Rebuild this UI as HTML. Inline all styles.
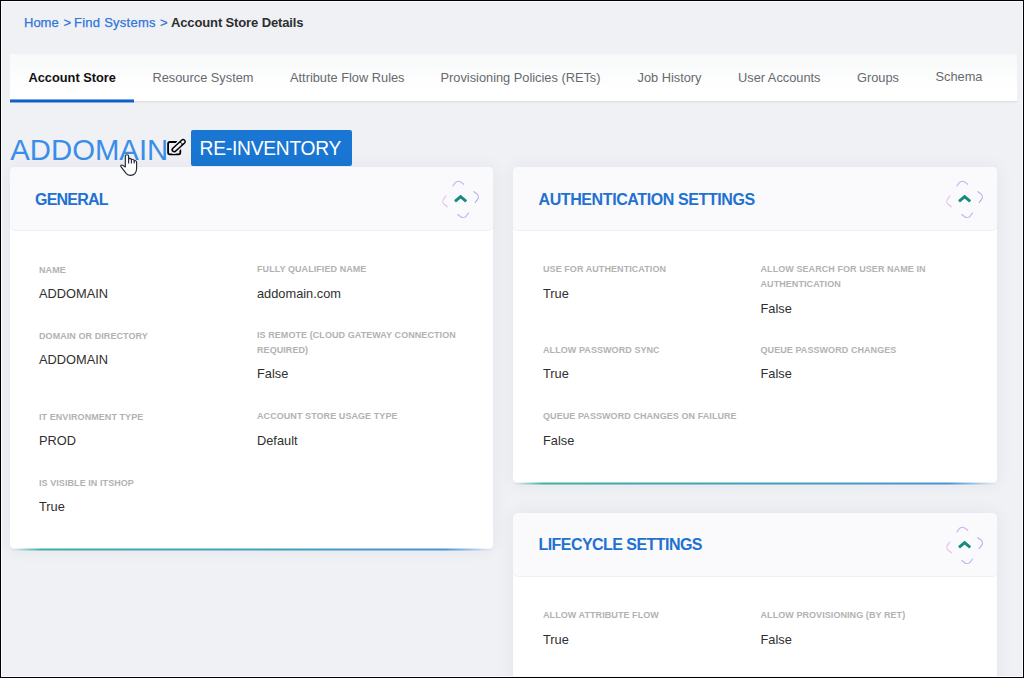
<!DOCTYPE html>
<html>
<head>
<meta charset="utf-8">
<title>Account Store Details</title>
<style>
*{box-sizing:border-box;margin:0;padding:0}
html,body{width:1024px;height:678px;overflow:hidden}
body{background:#eff1f5;font-family:"Liberation Sans",sans-serif;position:relative;color:#333}
.frame{position:absolute;left:0;top:0;width:1024px;height:678px;border:1px solid #000;box-shadow:inset 0 0 0 1px #f9fafc;z-index:50;pointer-events:none}
.t{position:absolute;white-space:nowrap;line-height:1}
.bc{font-size:13px;top:16.4px;color:#2f75da;-webkit-text-stroke:.25px #2f75da}
.bcb{color:#2e2e2e;font-weight:bold;-webkit-text-stroke:0}
.tabs{position:absolute;left:10px;top:54px;width:1007px;height:48px;background:linear-gradient(#f8f9fa,#ffffff 80%);border-bottom:1px solid #dfe2e6;box-shadow:0 1px 0 #e5e7eb}
.tab{font-size:12.8px;color:#666a70;top:18px}
.tab.act{color:#111;font-weight:bold}
.ul{position:absolute;left:0;top:45px;width:124px;height:3px;background:#0b63ca;transform:translateY(.45px)}
.title{font-size:29.3px;color:#3a8ee9;left:10.3px;top:135px;letter-spacing:0}
.btn{position:absolute;left:191px;top:130px;width:161px;height:36px;background:#1976d2;border-radius:2px}
.btn span{color:#fff;font-size:19.2px;left:8.5px;top:8.6px;letter-spacing:-.22px;transform:scaleY(1.05);transform-origin:0 16.3px}
.card{position:absolute;background:#fff;border-radius:5px;box-shadow:0 0 18px rgba(40,50,80,.065)}
.hd{position:absolute;left:0;top:0;width:100%;height:63px;background:#fafafc;border-radius:5px;box-shadow:0 1px 0 #f0f0f4}
.h{font-size:16px;font-weight:bold;color:#2171d1}
.lb{font-size:9px;font-weight:bold;color:#b2b2b2;letter-spacing:.07px}
.v{font-size:12.8px;color:#2f2f2f}
.bar{position:absolute;left:0;right:0;bottom:-1px;height:2px;transform:translateY(.45px);opacity:.88;background:linear-gradient(90deg,rgba(38,166,154,0),#26a69a 6.5%,#2a98b0 50%,#3388cf 90%,rgba(51,136,207,0));border-radius:0 0 5px 5px}
svg{position:absolute;overflow:visible}
</style>
</head>
<body>
<div class="t bc" style="left:24px">Home</div>
<div class="t bc" style="left:63.5px">&gt;</div>
<div class="t bc" style="left:74px;letter-spacing:.25px">Find Systems</div>
<div class="t bc" style="left:160px">&gt;</div>
<div class="t bc bcb" style="left:171px;letter-spacing:-.13px">Account Store Details</div>

<div class="tabs">
  <div class="t tab act" style="left:18.5px">Account Store</div>
  <div class="t tab" style="left:142.5px">Resource System</div>
  <div class="t tab" style="left:280px">Attribute Flow Rules</div>
  <div class="t tab" style="left:430.5px">Provisioning Policies (RETs)</div>
  <div class="t tab" style="left:627.5px">Job History</div>
  <div class="t tab" style="left:728px">User Accounts</div>
  <div class="t tab" style="left:847px">Groups</div>
  <div class="t tab" style="left:925.5px;top:17px">Schema</div>
  <div class="ul"></div>
</div>

<div class="t title">ADDOMAIN</div>
<div class="btn"><span class="t">RE-INVENTORY</span></div>

<div class="card" style="left:10px;top:167px;width:483px;height:382px"><div class="hd"></div><div class="bar"></div></div>
<div class="card" style="left:513px;top:167px;width:484px;height:316px"><div class="hd"></div><div class="bar"></div></div>
<div class="card" style="left:513px;top:513px;width:484px;height:200px"><div class="hd"></div></div>

<div class="t h" style="left:35px;top:192px;letter-spacing:-.8px">GENERAL</div>
<div class="t h" style="left:538.5px;top:192px;letter-spacing:-.4px">AUTHENTICATION SETTINGS</div>
<div class="t h" style="left:538.5px;top:537px;letter-spacing:-.55px">LIFECYCLE SETTINGS</div>

<!-- General -->
<div class="t lb" style="left:39px;top:266px">NAME</div>
<div class="t v" style="left:39px;top:288px">ADDOMAIN</div>
<div class="t lb" style="left:39px;top:332px">DOMAIN OR DIRECTORY</div>
<div class="t v" style="left:39px;top:354px">ADDOMAIN</div>
<div class="t lb" style="left:39px;top:413px">IT ENVIRONMENT TYPE</div>
<div class="t v" style="left:39px;top:435px">PROD</div>
<div class="t lb" style="left:39px;top:479px">IS VISIBLE IN ITSHOP</div>
<div class="t v" style="left:39px;top:501px">True</div>

<div class="t lb" style="left:257px;top:265px">FULLY QUALIFIED NAME</div>
<div class="t v" style="left:257px;top:288px">addomain.com</div>
<div class="t lb" style="left:257px;top:331px">IS REMOTE (CLOUD GATEWAY CONNECTION</div>
<div class="t lb" style="left:257px;top:346px">REQUIRED)</div>
<div class="t v" style="left:257px;top:368px">False</div>
<div class="t lb" style="left:257px;top:412px">ACCOUNT STORE USAGE TYPE</div>
<div class="t v" style="left:257px;top:435px">Default</div>

<!-- Authentication -->
<div class="t lb" style="left:543px;top:265px">USE FOR AUTHENTICATION</div>
<div class="t v" style="left:543px;top:288px">True</div>
<div class="t lb" style="left:543px;top:346px">ALLOW PASSWORD SYNC</div>
<div class="t v" style="left:543px;top:368px">True</div>
<div class="t lb" style="left:543px;top:412px">QUEUE PASSWORD CHANGES ON FAILURE</div>
<div class="t v" style="left:543px;top:435px">False</div>

<div class="t lb" style="left:760.5px;top:265px">ALLOW SEARCH FOR USER NAME IN</div>
<div class="t lb" style="left:760.5px;top:280px">AUTHENTICATION</div>
<div class="t v" style="left:760.5px;top:303px">False</div>
<div class="t lb" style="left:760.5px;top:346px">QUEUE PASSWORD CHANGES</div>
<div class="t v" style="left:760.5px;top:368px">False</div>

<!-- Lifecycle -->
<div class="t lb" style="left:543px;top:611px">ALLOW ATTRIBUTE FLOW</div>
<div class="t v" style="left:543px;top:634px">True</div>
<div class="t lb" style="left:760.5px;top:611px">ALLOW PROVISIONING (BY RET)</div>
<div class="t v" style="left:760.5px;top:634px">False</div>


<!-- edit icon -->
<svg style="left:166px;top:138px" width="21" height="19" viewBox="0 0 21 19">
  <path d="M10.4 4H3.9Q2.1 4 2.1 5.8V14.6Q2.1 16.4 3.9 16.4H12.5Q14.3 16.4 14.3 14.6V11.8" fill="none" stroke="#000" stroke-width="1.8" stroke-linecap="round"/>
  <path d="M8.2 11.7L17 3.7" stroke="#eff1f5" stroke-width="8" stroke-linecap="round" fill="none"/>
  <path d="M8.2 11.7L17 3.7" stroke="#000" stroke-width="5.5" stroke-linecap="round" fill="none"/>
  <path d="M8.3 11.6L14.2 6.2" stroke="#eff1f5" stroke-width="2.6" stroke-linecap="round" fill="none"/>
  <path d="M16.4 4.2L17.2 3.5" stroke="#f4f5f8" stroke-width="2.5" stroke-linecap="round" fill="none"/>
</svg>

<!-- collapse toggles -->
<svg style="left:0;top:0" width="1024" height="678" viewBox="0 0 1024 678">
  <defs>
    <linearGradient id="tg" gradientUnits="userSpaceOnUse" x1="-19" y1="0" x2="19" y2="0">
      <stop offset="0" stop-color="#ecc6ef"/><stop offset=".5" stop-color="#cfb8ec"/><stop offset="1" stop-color="#b4a8e6"/>
    </linearGradient>
    <g id="tog">
      <g fill="none" stroke-width="1.15" stroke-linecap="round">
        <path d="M6.1 -13.8H9.8A4 4 0 0 1 13.8 -9.8V-6.1" stroke="#b4aae9" transform="rotate(37)"/>
        <path d="M6.1 -13.8H9.8A4 4 0 0 1 13.8 -9.8V-6.1" stroke="#c8afec" transform="translate(.6 .8) rotate(127)"/>
        <path d="M6.1 -13.8H9.8A4 4 0 0 1 13.8 -9.8V-6.1" stroke="#e7bff0" transform="translate(0 .4) rotate(217)"/>
        <path d="M6.1 -13.8H9.8A4 4 0 0 1 13.8 -9.8V-6.1" stroke="#cdb5ee" transform="translate(-.3 0) rotate(307)"/>
      </g>
      <path d="M-5.6 2.4L0 -2.4L5.6 2.4" fill="none" stroke="#17897f" stroke-width="2.9" stroke-linejoin="miter" stroke-linecap="butt"/>
    </g>
  </defs>
  <use href="#tog" x="460.6" y="199"/>
  <use href="#tog" x="964.6" y="199"/>
  <use href="#tog" x="964.6" y="545"/>
</svg>

<!-- hand cursor -->
<svg style="left:120px;top:153.5px;z-index:20" width="18" height="23" viewBox="0 0 18 23">
  <path d="M5.3 12.9V2.1Q5.3 .7 6.95 .7Q8.6 .7 8.6 2.1V5.3Q8.7 4.4 10 4.4Q11.4 4.5 11.4 5.8Q11.5 5.4 12.9 5.5Q14.2 5.6 14.2 7Q14.5 6.5 15.5 6.7Q16.6 6.9 16.6 8.4V14.6Q16.6 17.6 15.1 19.4Q13.1 21.6 10.1 21.4Q7.6 21.1 6.1 19.4L1.1 12.9Q.3 11.9 1.1 11.3Q2.1 10.6 3.1 11.4Z" fill="#fff" stroke="#23263a" stroke-width="1.15" stroke-linejoin="round"/>
  <path d="M8.6 5V9.6M11.4 5.8V9.6M14.2 7V9.6" fill="none" stroke="#23263a" stroke-width="1.1"/>
</svg>

<div class="frame"></div>
</body>
</html>
